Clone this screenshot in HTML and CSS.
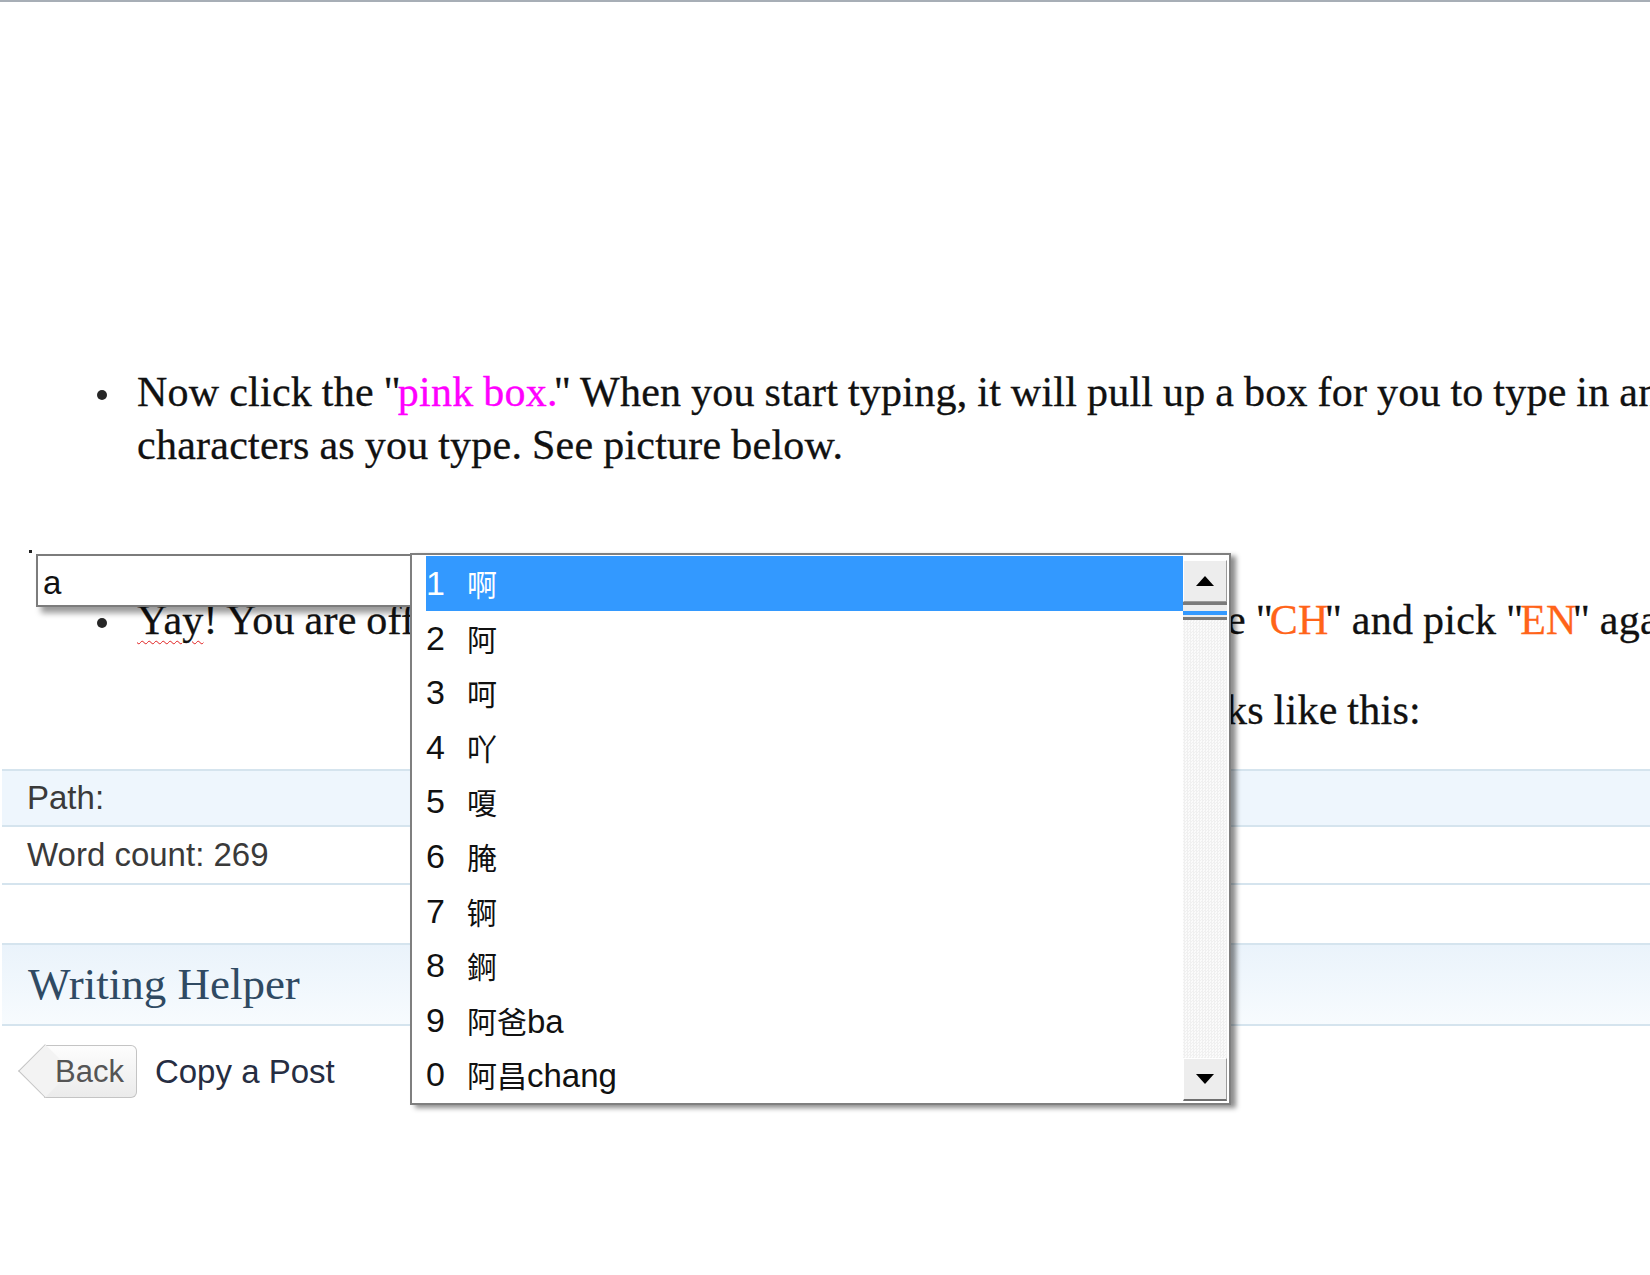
FILE: index.html
```html
<!DOCTYPE html>
<html lang="en">

<head>
    <meta charset="UTF-8">
    <title>Typing Chinese - step by step</title>
    <link rel="stylesheet" href="styles.css">
</head>

<body>
    <div class="topline"></div>

    <div class="post">
        <ul class="steps">
            <li>
                <div class="lines">
                    <div>Now click the <span class="q-open">"</span><span class="pink">pink box.</span><span class="q-close">"</span> When you start typing, it will pull up a box for you to type in and show the</div>
                    <div>characters as you type. See picture below.</div>
                </div>
            </li>
            <li class="step-two">
                <div class="split">
                    <span class="under"><span class="typo">Yay</span>! You are off and typing in Chinese. When you are done, just click th</span><span>e <span class="q-open">"</span><span class="orange">CH</span><span class="q-close">"</span> and pick <span class="q-open">"</span><span class="orange">EN</span><span class="q-close">"</span> again to go back to English.</span>
                </div>
            </li>
        </ul>
        <p class="note"><span class="under">When you are done, your post loo</span>ks like this:</p>
    </div>

    <div class="status">
        <div class="status-row path">Path:</div>
        <div class="status-row count">Word count: 269</div>
    </div>

    <div class="helper">
        <h3 class="helper-title">Writing Helper</h3>
        <div class="helper-nav">
            <button class="back-btn">Back</button>
            <span class="copy-link">Copy a Post</span>
        </div>
    </div>

    <!-- IME popup, sits over the post -->
    <span class="ime-dot"></span>
    <div class="ime-input">a</div>
    <div class="ime-list">
        <ol class="cands">
            <li class="active"><span class="num">1</span><span class="word">啊</span></li>
            <li><span class="num">2</span><span class="word">阿</span></li>
            <li><span class="num">3</span><span class="word">呵</span></li>
            <li><span class="num">4</span><span class="word">吖</span></li>
            <li><span class="num">5</span><span class="word">嗄</span></li>
            <li><span class="num">6</span><span class="word">腌</span></li>
            <li><span class="num">7</span><span class="word">锕</span></li>
            <li><span class="num">8</span><span class="word">錒</span></li>
            <li><span class="num">9</span><span class="word">阿爸<span class="py">ba</span></span></li>
            <li><span class="num">0</span><span class="word">阿昌<span class="py">chang</span></span></li>
        </ol>
        <div class="scroll">
            <div class="scroll-btn up"><span class="arrow-up"></span></div>
            <div class="scroll-thumb"></div>
            <div class="scroll-track"></div>
            <div class="scroll-btn down"><span class="arrow-down"></span></div>
        </div>
    </div>
</body>

</html>
```

FILE: styles.css
```css
body {
    margin: 0;
    height: 1275px;
    overflow: hidden;
    background: #ffffff;
    position: relative;
    font-family: "Liberation Sans", Arial, sans-serif;
}

.topline {
    height: 2px;
    background: #a7aeb6;
}

/* post text */
.post {
    padding-top: 364px;
    font-family: "Liberation Serif", "Times New Roman", serif;
    font-size: 42px;
    letter-spacing: 0.25px;
    word-spacing: -1px;
    line-height: 53px;
    color: #111111;
    -webkit-text-stroke: 0.3px #111111;
    white-space: nowrap;
}

/* straight quotes are narrow in the original font */
.q-open {
    letter-spacing: -3px;
}

.q-close {
    margin-left: -4px;
}

.steps {
    list-style: none;
    margin: 0;
    padding: 0;
}

.steps li {
    display: flex;
}

.steps li::before {
    content: '';
    flex-shrink: 0;
    width: 10px;
    height: 10px;
    border-radius: 50%;
    background: #262626;
    margin: 24px 30px 0 97px;
}

.steps .step-two {
    margin-top: 122px;
}

.split {
    display: flex;
}

.under {
    display: inline-block;
    overflow: hidden;
}

.step-two .under {
    width: 1090px;
}

.typo {
    text-decoration: underline wavy #e02020;
    text-decoration-thickness: 1px;
    text-underline-offset: 6px;
}

.pink {
    color: #ff00ff;
    -webkit-text-stroke: 0.3px #ff00ff;
}

.orange {
    color: #ff6419;
    -webkit-text-stroke: 0.3px #ff6419;
}

.note {
    margin: 37px 0 0 430px;
    display: flex;
}

.note .under {
    width: 796px;
}

/* editor status bar */
.status {
    margin: 32px 0 0 2px;
    font-size: 33px;
    color: #3a3a3a;
}

.status-row {
    padding-left: 25px;
    border-bottom: 2px solid #d5e4ee;
}

.path {
    height: 54px;
    line-height: 54px;
    border-top: 2px solid #d5e4ee;
    background: #eef6fd;
}

.count {
    height: 56px;
    line-height: 56px;
}

/* writing helper box */
.helper {
    margin: 58px 0 0 2px;
}

.helper-title {
    margin: 0;
    height: 79px;
    line-height: 79px;
    padding-left: 26px;
    border-top: 2px solid #d5e4ee;
    border-bottom: 2px solid #d5e4ee;
    background: linear-gradient(#eaf3fb, #f7fbfe);
    font-family: "Liberation Serif", Georgia, serif;
    font-size: 45px;
    font-weight: normal;
    color: #2f4a63;
}

.helper-nav {
    display: flex;
    align-items: center;
    margin-top: 19px;
    padding-left: 42px;
}

.back-btn {
    position: relative;
    z-index: 0;
    height: 53px;
    padding: 0 12px 0 11px;
    border: 1px solid #c4c4c4;
    border-left: none;
    border-radius: 0 6px 6px 0;
    background: linear-gradient(#fdfdfd, #ebebeb);
    font-family: "Liberation Sans", Arial, sans-serif;
    font-size: 31px;
    color: #555555;
}

.back-btn::before {
    content: '';
    position: absolute;
    z-index: -1;
    top: 6px;
    left: -18px;
    width: 37px;
    height: 37px;
    background: #f3f3f3;
    border-left: 1px solid #c4c4c4;
    border-bottom: 1px solid #c4c4c4;
    transform: rotate(45deg);
}

.copy-link {
    margin-left: 18px;
    font-size: 33px;
    color: #262d42;
}

/* IME candidate popup */
.ime-dot {
    position: absolute;
    left: 29px;
    top: 550px;
    width: 3px;
    height: 3px;
    background: #222;
}

.ime-input {
    position: absolute;
    left: 36px;
    top: 554px;
    width: 376px;
    height: 53px;
    box-sizing: border-box;
    padding: 4px 0 0 5px;
    border: 2px solid #7c7c7c;
    background: #ffffff;
    box-shadow: 5px 6px 6px rgba(0, 0, 0, 0.4);
    font-size: 33px;
    line-height: 45px;
    color: #111;
}

.ime-list {
    position: absolute;
    left: 410px;
    top: 553px;
    width: 821px;
    height: 552px;
    box-sizing: border-box;
    display: flex;
    padding: 1px 2px 2px 14px;
    border: 2px solid #7f7f7f;
    background: #ffffff;
    box-shadow: 5px 3px 5px rgba(0, 0, 0, 0.45);
}

.cands {
    flex: 1;
    list-style: none;
    margin: 0;
    padding: 0;
}

.cands li {
    display: flex;
    height: 54.6px;
    line-height: 54.6px;
    color: #111;
}

.cands .active {
    background: #3399ff;
    color: #ffffff;
}

.num {
    width: 41px;
    font-size: 34px;
}

.word {
    font-family: "Noto Sans CJK SC", sans-serif;
    font-size: 30px;
}

.py {
    font-family: "Liberation Sans", Arial, sans-serif;
    font-size: 33px;
}

.scroll {
    width: 44px;
    display: flex;
    flex-direction: column;
    padding-top: 4px;
}

.scroll-btn {
    height: 40px;
    display: flex;
    align-items: center;
    justify-content: center;
    background: #ededed;
    border: 1px solid;
    border-color: #ffffff #9a9a9a #9a9a9a #ffffff;
}

.arrow-up {
    border-left: 9px solid transparent;
    border-right: 9px solid transparent;
    border-bottom: 10px solid #000;
}

.arrow-down {
    border-left: 9px solid transparent;
    border-right: 9px solid transparent;
    border-top: 10px solid #000;
}

.scroll-thumb {
    height: 12px;
    border-top: 3px solid #7a7a7a;
    border-bottom: 3px solid #7a7a7a;
    background: linear-gradient(#ededed 0 6px, #3399ff 6px 10px, #ededed 10px);
}

.scroll-track {
    flex: 1;
    background: repeating-conic-gradient(#f0f0f0 0 25%, #fbfbfb 0 50%) 0 0 / 3px 3px;
}

.down {
    border-bottom: 2px solid #6f6f6f;
}
```
